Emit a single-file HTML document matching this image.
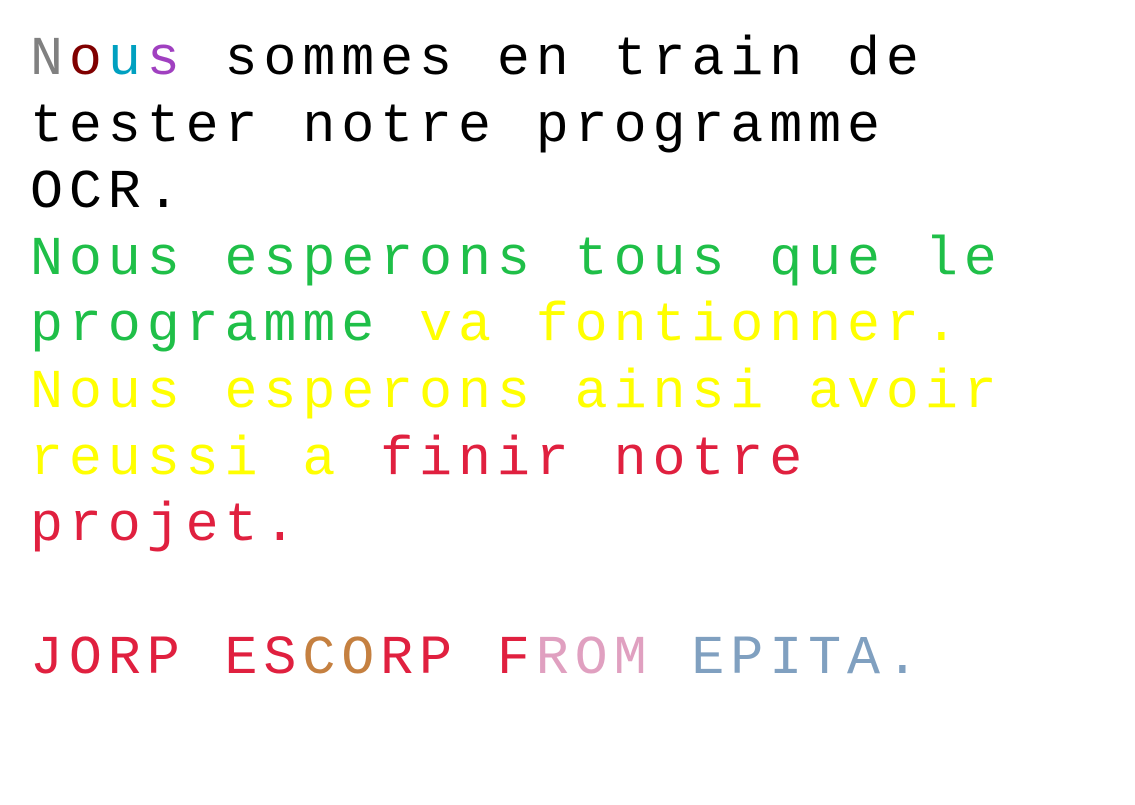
<!DOCTYPE html>
<html><head><style>
html,body{margin:0;padding:0;background:#fff;width:1135px;height:805px;overflow:hidden}
pre{margin:0;position:absolute;left:30px;top:27px;font-family:"Liberation Mono",monospace;font-size:55px;letter-spacing:5.9px;line-height:66.6px;color:#000}
.g{color:#1fbf48}.y{color:#ffff00}.r{color:#e0203f}.b{color:#c58040}.p{color:#e0a0c0}.s{color:#80a0c0}
</style></head><body>
<pre><span style="color:#808080">N</span><span style="color:#800000">o</span><span style="color:#00a0c0">u</span><span style="color:#a040c0">s</span> sommes en train de
tester notre programme
OCR.
<span class="g">Nous esperons tous que le
programme</span> <span class="y">va fontionner.
Nous esperons ainsi avoir
reussi a</span> <span class="r">finir notre
projet.</span>

<span class="r">JORP ES</span><span class="b">CO</span><span class="r">RP F</span><span class="p">ROM</span> <span class="s">EPITA.</span></pre>
</body></html>
